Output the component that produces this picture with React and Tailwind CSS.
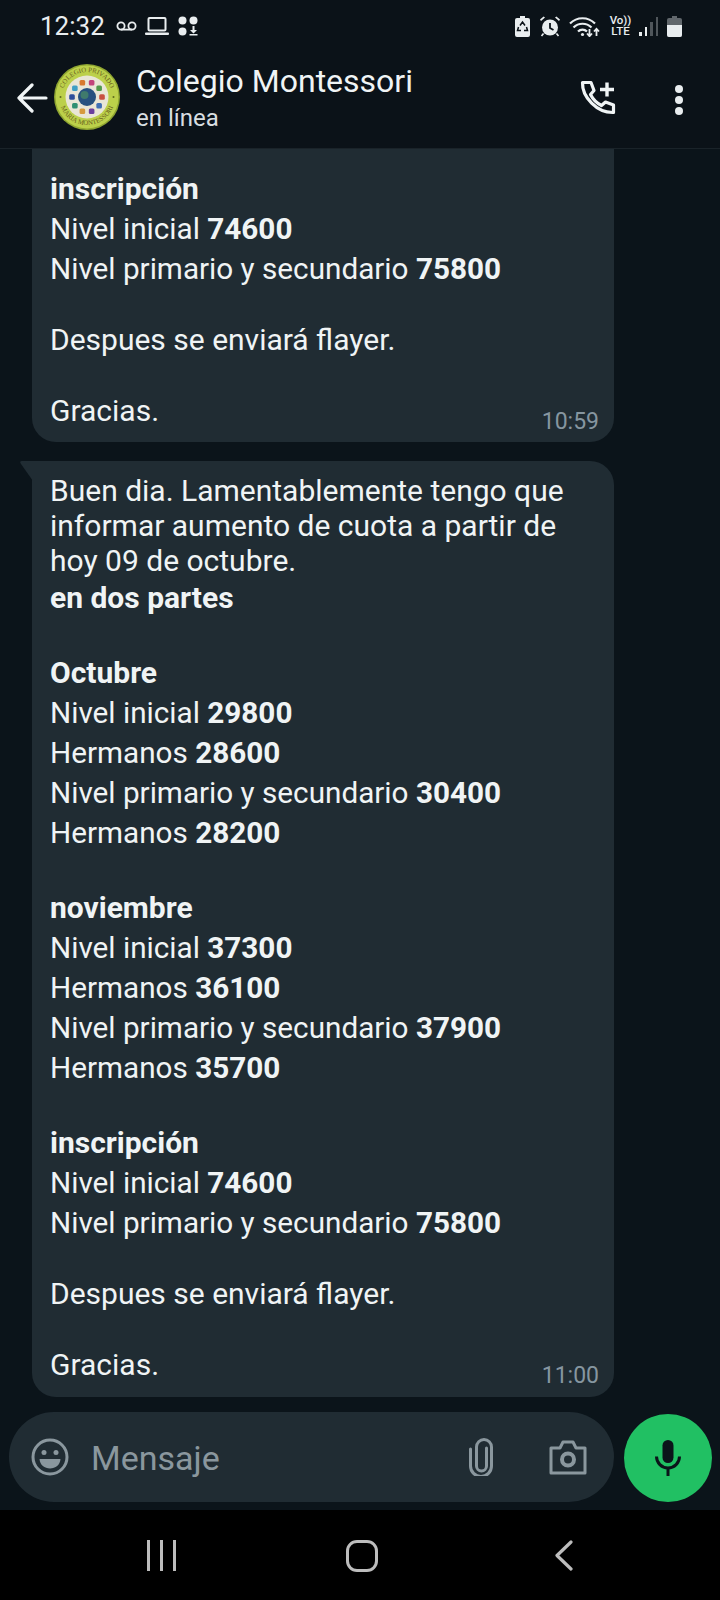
// App.jsx - chat de WhatsApp (modo oscuro) con dos mensajes recibidos
const roboto = { fontFamily: 'Roboto, "Noto Sans", sans-serif' }

const PRIMER_MENSAJE = [
  { b: 'inscripción' },
  { t: 'Nivel inicial ', b: '74600' },
  { t: 'Nivel primario y secundario ', b: '75800' },
  { blank: 33 },
  { t: 'Despues se enviará flayer.' },
  { blank: 36 },
]

const SEGUNDO_MENSAJE = [
  { t: 'Buen dia. Lamentablemente tengo que' },
  { t: 'informar aumento de cuota a partir de' },
  { t: 'hoy 09 de octubre.' },
  { b: 'en dos partes' },
  { blank: 35 },
  { b: 'Octubre' },
  { t: 'Nivel inicial ', b: '29800' },
  { t: 'Hermanos ', b: '28600' },
  { t: 'Nivel primario y secundario ', b: '30400' },
  { t: 'Hermanos ', b: '28200' },
  { blank: 35 },
  { b: 'noviembre' },
  { t: 'Nivel inicial ', b: '37300' },
  { t: 'Hermanos ', b: '36100' },
  { t: 'Nivel primario y secundario ', b: '37900' },
  { t: 'Hermanos ', b: '35700' },
  { blank: 35 },
  { b: 'inscripción' },
  { t: 'Nivel inicial ', b: '74600' },
  { t: 'Nivel primario y secundario ', b: '75800' },
  { blank: 33 },
  { t: 'Despues se enviará flayer.' },
  { blank: 36 },
]

function Linea({ l }) {
  if (l.blank === 33) return <div className="h-[33px]" />
  if (l.blank === 36) return <div className="h-[36px]" />
  if (l.blank) return <div className="h-[35px]" />
  if (l.t && l.b) {
    return (
      <div className="h-[40px] whitespace-nowrap text-[29.7px] leading-[40px]">
        {l.t}
        <span className="font-bold">{l.b}</span>
      </div>
    )
  }
  if (l.b) return <div className="h-[40px] whitespace-nowrap font-bold leading-[40px]">{l.b}</div>
  return <div className="h-[35px] whitespace-nowrap leading-[35px]">{l.t}</div>
}

function Burbuja({ lineas, hora, primera }) {
  return (
    <div className={primera
      ? 'relative ml-[32px] w-[582px] rounded-b-[24px] bg-[#202c33] pl-[18px] pr-[15px] pt-[20px] pb-[14px] text-[30px] text-[#f0f4f5]'
      : 'relative ml-[32px] w-[582px] rounded-b-[24px] rounded-tr-[24px] bg-[#202c33] pl-[18px] pr-[15px] pt-[12px] pb-[15px] text-[30px] text-[#f0f4f5]'}>
      {!primera && (
        <svg className="absolute left-[-13px] top-0" width="14" height="20" viewBox="0 0 14 20">
          <path d="M14 0H3Q0 0 2 3L14 20Z" fill="#202c33" />
        </svg>
      )}
      {lineas.map((l, i) => <Linea key={i} l={l} />)}
      <div className="flex h-[35px] items-center justify-between">
        <span>Gracias.</span>
        <span className="mt-[23px] text-[23px] text-[#8696a0]">{hora}</span>
      </div>
    </div>
  )
}

function Estado() {
  return (
    <div className="flex h-[52px] items-center justify-between pl-[40px] pr-[38px] text-[#e9edef]">
      <div className="flex items-center">
        <span className="text-[26px] leading-none">12:32</span>
        {/* buzon de voz */}
        <svg className="ml-[11px]" width="21" height="10" viewBox="0 0 21 10" fill="none" stroke="#e9edef" strokeWidth="1.8">
          <circle cx="5" cy="5" r="3.6" />
          <circle cx="16" cy="5" r="3.6" />
          <path d="M5 8.6H16" />
        </svg>
        {/* notebook */}
        <svg className="ml-[8px]" width="24" height="19" viewBox="0 0 24 19" fill="none">
          <rect x="3.5" y="1" width="17" height="12.5" rx="1" stroke="#e9edef" strokeWidth="2" />
          <rect x="0" y="15.5" width="24" height="2.6" rx="1" fill="#e9edef" />
        </svg>
        {/* apps */}
        <svg className="ml-[9px]" width="21" height="20" viewBox="0 0 21 20" fill="#e9edef">
          <circle cx="4.5" cy="4.5" r="4" />
          <circle cx="15.5" cy="4.5" r="4" />
          <circle cx="4.5" cy="15.5" r="4" />
          <path d="M14.5 10h2v4h2.5l-3.5 3.4L12 14h2.5zM11.5 18h8v1.6h-8z" />
        </svg>
      </div>
      <div className="flex items-center">
        {/* ahorro de bateria */}
        <svg width="15" height="21" viewBox="0 0 15 21" fill="#e9edef">
          <path d="M5 0h5v2h3a2 2 0 0 1 2 2v15a2 2 0 0 1-2 2H2a2 2 0 0 1-2-2V4a2 2 0 0 1 2-2h3z" />
          <path d="M5 9.5 7.5 6 10 9.5M11.5 11l1 3.5H9M3.5 11l-1 3.5H6" fill="none" stroke="#0b1218" strokeWidth="1.5" />
        </svg>
        {/* alarma */}
        <svg className="ml-[10px]" width="20" height="21" viewBox="0 0 20 21" fill="#e9edef">
          <circle cx="10" cy="11.5" r="8" />
          <path d="M10 7v5l3.5 2" fill="none" stroke="#0b1218" strokeWidth="1.8" />
          <path d="M1 5 5 1.4 3.6.4 0 3.6zM19 5 15 1.4 16.4.4 20 3.6z" />
          <path d="M3.5 17.5 1.5 20M16.5 17.5 18.5 20" stroke="#e9edef" strokeWidth="1.6" />
        </svg>
        {/* wifi */}
        <svg className="ml-[9px]" width="31" height="21" viewBox="0 0 31 21" fill="none" stroke="#e9edef" strokeWidth="2.2">
          <path d="M1 7.5C8 .5 19 .5 26 7.5" />
          <path d="M4.5 11.5C9.5 6.5 17.5 6.5 22.5 11.5" />
          <path d="M9 15.5C11.5 13 15.5 13 18 15.5" />
          <circle cx="13.5" cy="18.5" r="1.6" fill="#e9edef" stroke="none" />
          <path d="M20.5 13v7M18 17.5l2.5 2.7 2.5-2.7M27.5 20v-7M25 15.5l2.5-2.7 2.5 2.7" strokeWidth="1.8" />
        </svg>
        {/* VoLTE */}
        <div className="ml-[10px] flex w-[21px] flex-col items-center text-[11.5px] font-medium leading-[11px]">
          <span>Vo))</span>
          <span>LTE</span>
        </div>
        {/* senal */}
        <div className="ml-[8px] flex h-[19px] items-end gap-[3px]">
          <div className="h-[4px] w-[2.5px] bg-[#e9edef]" />
          <div className="h-[9px] w-[2.5px] bg-[#e9edef]" />
          <div className="h-[14px] w-[2.5px] bg-[#50565b]" />
          <div className="h-[19px] w-[2.5px] bg-[#50565b]" />
        </div>
        {/* bateria */}
        <svg className="ml-[9px]" width="15" height="21" viewBox="0 0 15 21">
          <path d="M5 0h5v2h3a2 2 0 0 1 2 2v15a2 2 0 0 1-2 2H2a2 2 0 0 1-2-2V4a2 2 0 0 1 2-2h3z" fill="#61676c" />
          <path d="M0 9h15v10a2 2 0 0 1-2 2H2a2 2 0 0 1-2-2z" fill="#e9edef" />
        </svg>
      </div>
    </div>
  )
}

function Logo() {
  const colores = ['#c8503f', '#3f6fb4', '#6a3f9e', '#d69a3e', '#2f8f72', '#2e4f9a', '#3f9fc4', '#d87a2e', '#c2447a', '#4f9a4a']
  return (
    <svg width="66" height="66" viewBox="0 0 66 66" className="shrink-0">
      <defs>
        <path id="arcoSup" d="M8 33a25 25 0 0 1 50 0" />
        <path id="arcoInf" d="M5 33a28 28 0 0 0 56 0" />
      </defs>
      <circle cx="33" cy="33" r="33" fill="#8fa531" />
      <circle cx="33" cy="33" r="31.500" fill="#bcd04a" />
      <circle cx="33" cy="33" r="21.500" fill="#e9e6d6" />
      {colores.map((c, i) => {
        const a = (i / colores.length) * Math.PI * 2
        return (
          <rect
            key={i}
            x={33 + Math.cos(a) * 15 - 2.8}
            y={33 + Math.sin(a) * 15 - 2.8}
            width="5.600"
            height="5.600"
            rx="1.500"
            fill={c}
          />
        )
      })}
      <circle cx="33" cy="33" r="9" fill="#27517f" />
      <circle cx="30.500" cy="31" r="4" fill="#3f7a6c" />
      <circle cx="6.500" cy="33" r="1" fill="#5f6a1e" />
      <circle cx="59.500" cy="33" r="1" fill="#5f6a1e" />
      <text fontSize="6.800" fill="#6a5f1e" fontFamily="Liberation Serif, serif">
        <textPath href="#arcoSup" startOffset="50%" textAnchor="middle">COLEGIO PRIVADO</textPath>
      </text>
      <text fontSize="6.800" fill="#6a5f1e" fontFamily="Liberation Serif, serif">
        <textPath href="#arcoInf" startOffset="50%" textAnchor="middle">MARIA MONTESSORI</textPath>
      </text>
    </svg>
  )
}

function Cabecera() {
  return (
    <div className="flex h-[97px] items-start border-b border-[#1a2329] pl-[17px] pr-[37px]">
      <svg className="mt-[31px]" width="31" height="30" viewBox="0 0 31 30" fill="none" stroke="#f0f4f5" strokeWidth="3.2" strokeLinecap="round" strokeLinejoin="round">
        <path d="M15 2 2 15l13 13M2 15h27" />
      </svg>
      <div className="ml-[6px] mt-[12px]"><Logo /></div>
      <div className="ml-[16px] flex-1 pt-[11px]">
        <div className="text-[32px] leading-[36px] text-[#f0f4f5]">Colegio Montessori</div>
        <div className="mt-[5px] text-[24px] leading-[28px] text-[#d8dee1]">en línea</div>
      </div>
      {/* llamada con + */}
      <svg className="mt-[27px]" width="36" height="36" viewBox="0 0 36 36" fill="none" stroke="#f0f4f5" strokeWidth="3.2" strokeLinejoin="round">
        <path d="M2.5 3.5h8.5l3 8-3.5 4c2.5 5 6 8.500 11 11l4-3.500 8 3v7.500C17 34 2 18 2.500 3.500z" />
        <path d="M20 10.500h14M27 3.500v14" strokeWidth="3.400" />
      </svg>
      <div className="ml-[59px] mt-[33px] flex flex-col gap-[3px]">
        <div className="h-[8px] w-[8px] rounded-full bg-[#e9edef]" />
        <div className="h-[8px] w-[8px] rounded-full bg-[#e9edef]" />
        <div className="h-[8px] w-[8px] rounded-full bg-[#e9edef]" />
      </div>
    </div>
  )
}

function BarraMensaje() {
  return (
    <div className="flex h-[98px] items-start pl-[9px] pr-[8px]">
      <div className="flex h-[90px] w-[605px] items-center rounded-[45px] bg-[#202c33] pl-[22px] pr-[27px]">
        <svg width="38" height="38" viewBox="0 0 38 38" fill="none">
          <circle cx="19" cy="19" r="17" stroke="#8a979e" strokeWidth="3" />
          <circle cx="13" cy="14.500" r="2.500" fill="#8a979e" />
          <circle cx="25" cy="14.500" r="2.500" fill="#8a979e" />
          <path d="M8.500 21h21c-.5 6-5 9.500-10.500 9.500S9 27 8.500 21z" fill="#8a979e" />
        </svg>
        <span className="ml-[22px] mt-[2px] flex-1 text-[34px] text-[#8a979e]">Mensaje</span>
        <svg width="26" height="38" viewBox="0 0 26 38" fill="none" stroke="#8a979e" strokeWidth="3" strokeLinecap="round">
          <path d="M18 10v18a5 5 0 0 1-10 0V9a7.500 7.500 0 0 1 15 0v19a10.500 10.500 0 0 1-21 0V11" transform="translate(.5 0)" />
        </svg>
        <svg className="ml-[55px]" width="38" height="35" viewBox="0 0 38 35" fill="none" stroke="#8a979e" strokeWidth="3" strokeLinejoin="round">
          <path d="M2 8h9l3-6h10l3 6h9v25H2z" />
          <circle cx="19" cy="19.500" r="6" strokeWidth="4" />
        </svg>
      </div>
      <div className="ml-[10px] mt-[2px] flex h-[88px] w-[88px] items-center justify-center rounded-full bg-[#21c063]">
        <svg width="26" height="36" viewBox="0 0 26 36" fill="#0b141a">
          <rect x="7.500" y="0" width="11" height="23" rx="5.500" />
          <path d="M1.500 16.500a11.500 11.500 0 0 0 23 0" fill="none" stroke="#0b141a" strokeWidth="3" />
          <rect x="11.500" y="27" width="3" height="9" />
        </svg>
      </div>
    </div>
  )
}

function Navegacion() {
  return (
    <div className="relative flex h-[90px] items-start bg-black pt-[30px]">
      <div className="ml-[147px] flex h-[31px] gap-[10px]">
        <div className="w-[3px] bg-[#bdbdbd]" />
        <div className="w-[3px] bg-[#bdbdbd]" />
        <div className="w-[3px] bg-[#bdbdbd]" />
      </div>
      <div className="ml-[170px] h-[32px] w-[32px] rounded-[11px] border-[3px] border-[#bdbdbd]" />
      <svg className="ml-[177px]" width="18" height="31" viewBox="0 0 18 31" fill="none" stroke="#bdbdbd" strokeWidth="3.200" strokeLinecap="round" strokeLinejoin="round">
        <path d="M16 2 2 15.500 16 29" />
      </svg>
    </div>
  )
}

export default function App() {
  return (
    <div className="flex h-[1600px] w-[720px] flex-col overflow-hidden bg-[#0b141a]" style={roboto}>
      <div className="bg-[#0b1218]">
        <Estado />
        <Cabecera />
      </div>
      <div className="flex flex-1 flex-col gap-[19px] overflow-hidden">
        <Burbuja primera lineas={PRIMER_MENSAJE} hora="10:59" />
        <Burbuja lineas={SEGUNDO_MENSAJE} hora="11:00" />
      </div>
      <BarraMensaje />
      <Navegacion />
    </div>
  )
}
